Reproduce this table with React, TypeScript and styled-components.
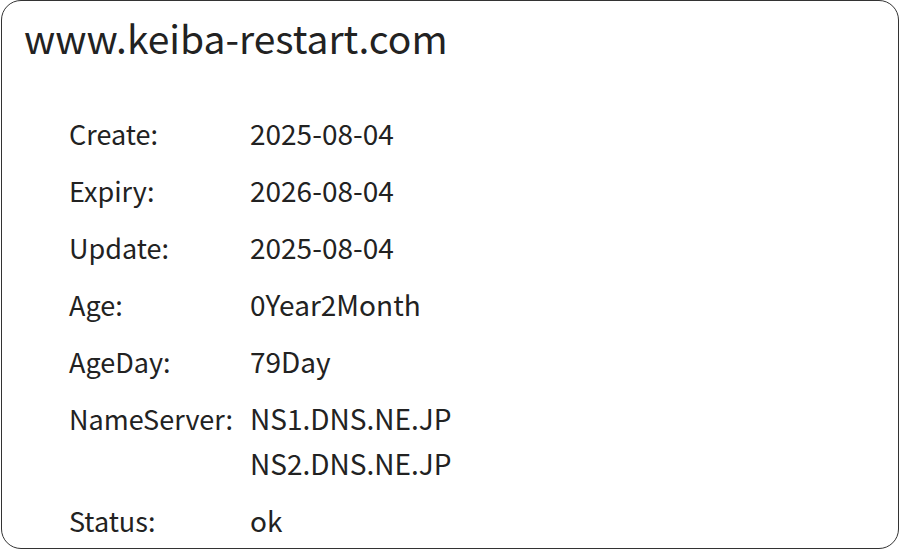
import React from "react";
import styled, { createGlobalStyle } from "styled-components";

const Global = createGlobalStyle`
  html, body { margin: 0; padding: 0; background: #fff; }
  body { font-family: "Noto Sans CJK JP", "Noto Sans", sans-serif; color: #222; }
`;

const Card = styled.div`
  box-sizing: border-box;
  margin: 0 1px;
  height: 549px;
  border: 1.5px solid #333;
  border-radius: 20px;
  padding: 10px 22px 0 22px;
  overflow: hidden;
`;

const Title = styled.h1`
  margin: 0;
  font-size: 39px;
  font-weight: 400;
  line-height: 52px;
  color: #222;
`;

const List = styled.dl`
  margin: 48px 0 0 45px;
  display: grid;
  grid-template-columns: 181px 1fr;
  row-gap: 12px;
  font-size: 28px;
  line-height: 45px;
`;

const Label = styled.dt`
  margin: 0;
  font-size: 27px;
`;

const Value = styled.dd`
  margin: 0;
  display: flex;
  flex-direction: column;
`;

const rows: [string, string[]][] = [
  ["Create:", ["2025-08-04"]],
  ["Expiry:", ["2026-08-04"]],
  ["Update:", ["2025-08-04"]],
  ["Age:", ["0Year2Month"]],
  ["AgeDay:", ["79Day"]],
  ["NameServer:", ["NS1.DNS.NE.JP", "NS2.DNS.NE.JP"]],
  ["Status:", ["ok"]],
];

export default function App() {
  return (
    <>
      <Global />
      <Card>
        <Title>www.keiba-restart.com</Title>
        <List>
          {rows.map(([k, vs]) => (
            <React.Fragment key={k}>
              <Label>{k}</Label>
              <Value>
                {vs.map((v) => (
                  <span key={v}>{v}</span>
                ))}
              </Value>
            </React.Fragment>
          ))}
        </List>
      </Card>
    </>
  );
}
